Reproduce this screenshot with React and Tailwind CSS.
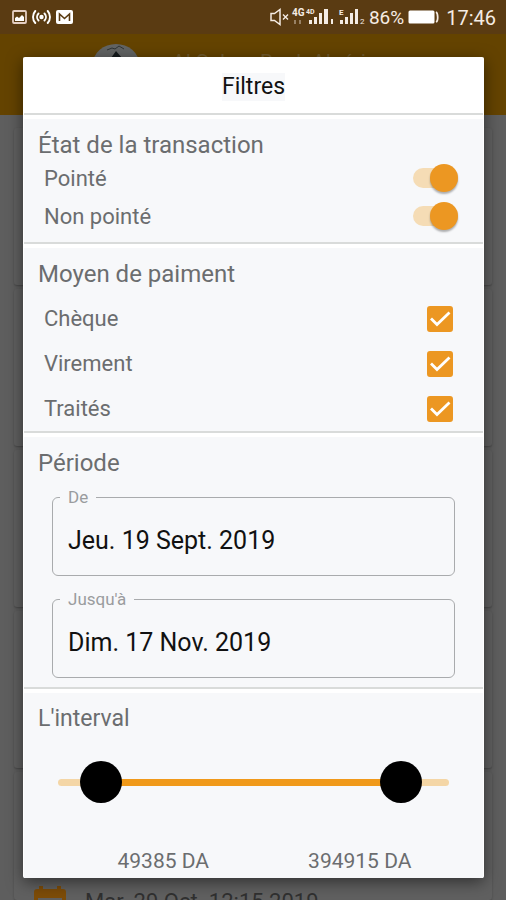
import React, { useState } from "react";

const MAX_AMOUNT = 450000;

const StatusBar = () => (
  <div className="flex h-[34px] items-center justify-between bg-[#5a3b12] pl-3 pr-[10px] text-[#f5ece4]">
    <div className="flex items-center gap-[5px]">
      <svg width="15" height="14" viewBox="0 0 15 14" fill="none">
        <rect x="1" y="1" width="13" height="12" rx="1" stroke="#e5cfc3" strokeWidth="1.8" />
        <path d="M3 11V8l2-1.500 2 1.500 3-3 2 2V11z" fill="#fff" />
      </svg>
      <svg width="19" height="14" viewBox="0 0 19 14" fill="none" stroke="#fff" strokeWidth="1.900" strokeLinecap="round">
        <circle cx="9.500" cy="7" r="2.200" fill="#fff" stroke="none" />
        <path d="M6.500 3.500a5 5 0 0 0 0 7M12.500 3.500a5 5 0 0 1 0 7M3.300 1a9 9 0 0 0 0 12M15.700 1a9 9 0 0 1 0 12" />
      </svg>
      <svg width="17" height="14" viewBox="0 0 17 14">
        <rect width="17" height="14" rx="2" fill="#fff" />
        <path d="M3.500 11V4l5 4.500 5-4.500v7" fill="none" stroke="#5a3b12" strokeWidth="1.600" />
      </svg>
    </div>
    <div className="flex items-center">
      <svg width="96" height="20" viewBox="0 0 96 20" fill="#f5ece4" className="mr-[3px]">
        <path d="M1 6.500h3.500L10 2.500v15L4.500 13.500H1z" fill="none" stroke="#f5ece4" strokeWidth="1.500" />
        <path d="M13 7.500l5 5M18 7.500l-5 5" stroke="#f5ece4" strokeWidth="1.400" />
        <text x="22" y="9" fontSize="10" fontWeight="700" fontFamily="Roboto, sans-serif">4G</text>
        <text x="36" y="7" fontSize="7" fontWeight="700" fontFamily="Roboto, sans-serif">4D</text>
        <path d="M24 13h2v4h-2zM29 13h2v4h-2z" opacity="0.400" />
        <path d="M39 13h3v4h-3zM44 10h3v7h-3zM49 6h3v11h-3zM54 2h4v15h-4z" />
        <path d="M61 12h2v5h-2z" />
        <text x="69" y="8" fontSize="8" fontWeight="700" fontFamily="Roboto, sans-serif">E</text>
        <path d="M70 13h3v4h-3zM75 10h3v7h-3zM80 6h3v11h-3zM85 2h3v15h-3z" />
        <text x="90" y="17" fontSize="8" fontFamily="Roboto, sans-serif">2</text>
      </svg>
      <span className="pt-[2px] text-[19px] leading-6">86%</span>
      <svg width="31" height="14" viewBox="0 0 31 14" className="ml-1 mr-[7px]">
        <rect x="0.500" y="0.500" width="26" height="13" rx="1.500" fill="#fff" />
        <path d="M28 2c2 1 2.500 9 0 10" fill="none" stroke="#f5ece4" strokeWidth="1.800" />
      </svg>
      <span className="pt-[2px] text-[20px] leading-6">17:46</span>
    </div>
  </div>
);

const cardClasses = "rounded-[3px] bg-[#606060] shadow-[0_1px_2px_rgba(0,0,0,0.25)]";

const Background = () => (
  <div aria-hidden="true" className="flex min-h-screen flex-col bg-[#5e5e5e]">
    <StatusBar />
    <div className="flex h-[81px] gap-8 bg-[#644300] pl-[92px] pt-[10px]">
      <svg width="48" height="48" viewBox="0 0 48 48">
        <ellipse cx="24" cy="20" rx="23" ry="20" fill="#626464" />
        <path d="M15 6l5-2 3 1 4-3 5 3" fill="none" stroke="#303434" />
        <path d="M19 14l5-7 6 7z" fill="#151a1c" />
      </svg>
      <span className="pt-[6px] text-[21px] leading-6 text-[#705a2c]">Al Salam Bank Algérie</span>
    </div>
    <div className="flex flex-1 flex-col gap-1 px-[14px] pt-[13px]">
      <div className={`h-[157px] ${cardClasses}`} />
      <div className={`h-[157px] ${cardClasses}`} />
      <div className={`h-[157px] ${cardClasses}`} />
      <div className={`h-[157px] ${cardClasses}`} />
      <div className={`flex flex-1 flex-col justify-end ${cardClasses}`}>
        <div className="flex h-4 items-start gap-[19px] overflow-hidden pl-5">
          <svg width="32" height="34" viewBox="0 0 32 34" className="mt-[2px] shrink-0">
            <path d="M5 0h4v3h14V0h4v3h2a3 3 0 0 1 3 3v28H0V6a3 3 0 0 1 3-3h2z" fill="#7d4c08" />
            <path d="M4 12h24v20H4z" fill="#606060" />
          </svg>
          <span className="mt-[6px] whitespace-nowrap text-[22px] leading-6 text-[#303030]">Mar. 29 Oct. 12:15 2019</span>
        </div>
      </div>
    </div>
  </div>
);

const Section = ({ title, className, children }) => (
  <section className={`border-b-2 border-b-[#d9dbda] border-t-4 border-t-white bg-[#f7f8fa] ${className}`}>
    <h2 className="pl-[14px] text-[24px] leading-7">{title}</h2>
    {children}
  </section>
);

const SwitchRow = ({ label, checked, onChange }) => (
  <label className="flex h-[38px] items-center justify-between pl-5 pr-[25px] text-[22px]">
    {label}
    <input
      type="checkbox"
      role="switch"
      checked={checked}
      onChange={onChange}
      className="flex h-5 w-[45px] appearance-none items-center justify-start rounded-full bg-[#f5dcb5] before:size-7 before:shrink-0 before:rounded-full before:bg-[#ec9722] before:shadow-[0_2px_2px_rgba(0,0,0,0.3)] checked:justify-end"
    />
  </label>
);

const CheckRow = ({ label, checked, onChange }) => (
  <label className="flex h-[45px] items-center justify-between pl-5 pr-[30px] text-[22px]">
    {label}
    <span className="grid place-items-center">
      <input
        type="checkbox"
        checked={checked}
        onChange={onChange}
        className="peer col-start-1 row-start-1 size-[26px] appearance-none rounded-[3px] border-2 border-[#ec9722] checked:bg-[#ec9722]"
      />
      <svg viewBox="0 0 26 26" className="pointer-events-none invisible col-start-1 row-start-1 size-[26px] peer-checked:visible">
        <path d="M4 12.500l6 6L22.500 6.500" fill="none" stroke="#fff" strokeWidth="2.800" />
      </svg>
    </span>
  </label>
);

const DateField = ({ id, label, value, onChange }) => (
  <fieldset className="rounded-md border border-[#a9abad] pb-[7px] pl-[7px] pt-1">
    <legend className="px-2 text-[17px] leading-[22px] text-[#9a9c9e]">
      <label htmlFor={id}>{label}</label>
    </legend>
    <input
      id={id}
      type="text"
      value={value}
      onChange={onChange}
      className="h-14 w-full bg-transparent pl-2 text-[25px] text-[#111] outline-none"
    />
  </fieldset>
);

const thumbClasses =
  "pointer-events-none absolute inset-0 h-full w-full appearance-none bg-transparent [&::-webkit-slider-thumb]:pointer-events-auto [&::-webkit-slider-thumb]:size-[42px] [&::-webkit-slider-thumb]:appearance-none [&::-webkit-slider-thumb]:rounded-full [&::-webkit-slider-thumb]:bg-black";

const RangeSlider = ({ min, max, setMin, setMax }) => (
  <div className="relative h-[42px] px-[21px]">
    <div className="flex h-full items-center">
      <div className="h-[7px] w-full overflow-hidden rounded-full bg-[#f4d6a6]">
        <div
          className="h-full bg-[#f0991a]"
          style={{
            marginLeft: `${(min / MAX_AMOUNT) * 100}%`,
            width: `${((max - min) / MAX_AMOUNT) * 100}%`,
          }}
        />
      </div>
    </div>
    <input
      type="range"
      aria-label="Montant minimum"
      min="0"
      max={MAX_AMOUNT}
      value={min}
      onChange={(e) => setMin(Math.min(Number(e.target.value), max))}
      className={thumbClasses}
    />
    <input
      type="range"
      aria-label="Montant maximum"
      min="0"
      max={MAX_AMOUNT}
      value={max}
      onChange={(e) => setMax(Math.max(Number(e.target.value), min))}
      className={thumbClasses}
    />
  </div>
);

const App = () => {
  const [states, setStates] = useState({ "Pointé": true, "Non pointé": true });
  const [methods, setMethods] = useState({ "Chèque": true, "Virement": true, "Traités": true });
  const [from, setFrom] = useState("Jeu. 19 Sept. 2019");
  const [to, setTo] = useState("Dim. 17 Nov. 2019");
  const [min, setMin] = useState(49385);
  const [max, setMax] = useState(394915);

  return (
    <div className="relative font-[Roboto,sans-serif]">
      <Background />
      {/* Filter dialog on top of the transactions page */}
      <div className="absolute inset-0 pb-[22px] pl-[23px] pr-[22px] pt-[57px]">
        <div
          role="dialog"
          aria-labelledby="filters-title"
          className="rounded-[2px] border-x border-white bg-white text-[#6b6d6f] shadow-[0_4px_16px_rgba(0,0,0,0.5)]"
        >
          <header className="flex h-[58px] items-center justify-center border-b-2 border-[#d9dbda] pt-[3px]">
            <h1 id="filters-title" className="bg-[#f7f8fa] text-[23px] leading-7 text-[#111]">Filtres</h1>
          </header>

          <Section title="État de la transaction" className="pb-[7px] pt-3">
            {Object.keys(states).map((name) => (
              <SwitchRow
                key={name}
                label={name}
                checked={states[name]}
                onChange={() => setStates({ ...states, [name]: !states[name] })}
              />
            ))}
          </Section>

          <Section title="Moyen de paiment" className="pt-3">
            <div className="pt-2">
              {Object.keys(methods).map((name) => (
                <CheckRow
                  key={name}
                  label={name}
                  checked={methods[name]}
                  onChange={() => setMethods({ ...methods, [name]: !methods[name] })}
                />
              ))}
            </div>
          </Section>

          <Section title="Période" className="pb-[9px] pt-3">
            <div className="flex flex-col gap-3 px-7 pt-[9px]">
              <DateField id="date-from" label="De" value={from} onChange={(e) => setFrom(e.target.value)} />
              <DateField id="date-to" label="Jusqu'à" value={to} onChange={(e) => setTo(e.target.value)} />
            </div>
          </Section>

          <section className="border-t-4 border-white bg-[#f7f8fa] pb-[3px] pt-3">
            <h2 className="pl-[14px] text-[23px] leading-7">L'interval</h2>
            <div className="px-[13px] pt-7">
              <RangeSlider min={min} max={max} setMin={setMin} setMax={setMax} />
            </div>
            <div className="flex pl-[41px] pr-[25px] pt-11 text-center text-[21px] leading-7">
              <output className="flex-1">{min} DA</output>
              <output className="flex-1">{max} DA</output>
            </div>
          </section>
        </div>
      </div>
    </div>
  );
};

export default App;
